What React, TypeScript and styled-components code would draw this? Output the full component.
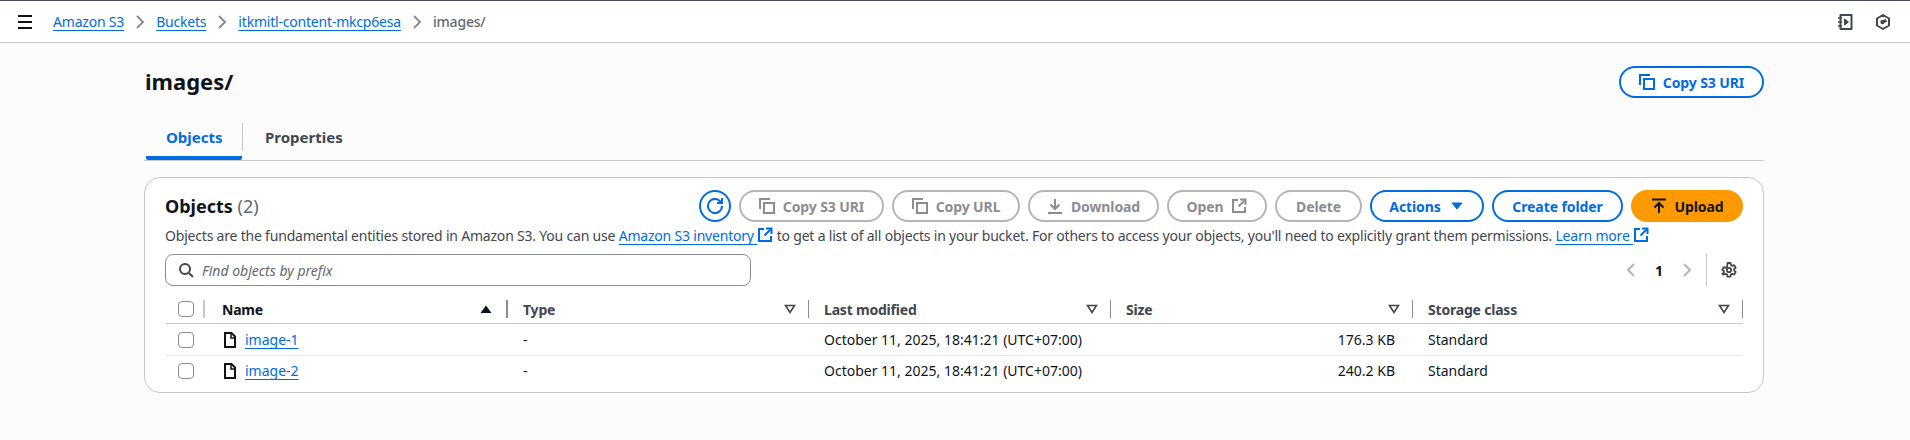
import React from 'react';
import styled, { createGlobalStyle } from 'styled-components';

const BLUE = '#006ce0';
const FONT = `'Noto Sans', 'Open Sans', Arial, sans-serif`;

const GlobalStyle = createGlobalStyle`
  html, body {
    margin: 0;
    padding: 0;
    background: #fcfcfd;
    font-family: ${FONT};
    font-size: 14px;
    color: #0f141a;
  }
  * { box-sizing: border-box; }
`;

const Page = styled.div`
  width: 1910px;
  height: 440px;
  overflow: hidden;
`;

const Header = styled.header`
  height: 43px;
  background: #fff;
  border-top: 1px solid #414d5c;
  border-bottom: 1px solid #c6c6cd;
  display: flex;
  align-items: center;
  padding: 0 19px 0 17px;
`;

const Crumbs = styled.nav`
  display: flex;
  align-items: center;
  margin-left: 20px;
  flex: 1;
  letter-spacing: -0.2px;
`;

const TextLink = styled.a`
  color: ${BLUE};
  text-decoration: underline;
  text-decoration-thickness: 1px;
  text-underline-offset: 3px;
`;

const CrumbSep = styled.span`
  display: flex;
  width: 32px;
  justify-content: center;
  color: #8c8c94;
`;

const CrumbCurrent = styled.span`
  color: #656871;
  font-weight: 500;
`;

const HeaderIcons = styled.div`
  display: flex;
  gap: 22px;
  color: #424650;
`;

const Main = styled.main`
  padding: 23px 146px 0 144px;
`;

const TitleRow = styled.div`
  display: flex;
  justify-content: space-between;
  align-items: center;
  padding-left: 1px;
  height: 32px;
`;

const Title = styled.h1`
  margin: 0 0 2px;
  font-size: 22px;
  font-weight: 700;
  line-height: 30px;
`;

const Tabs = styled.div`
  display: flex;
  margin-top: 16px;
  height: 47px;
  border-bottom: 1px solid #c6c6cd;
  padding-left: 2px;
`;

const Tab = styled.div<{ $active?: boolean }>`
  width: ${(p) => (p.$active ? '96px' : '126px')};
  height: 46px;
  padding-top: 12px;
  padding-left: ${(p) => (p.$active ? '20px' : '22px')};
  font-size: 15px;
  font-weight: 700;
  line-height: 22px;
  color: ${(p) => (p.$active ? BLUE : '#424650')};
  border-bottom: 4px solid ${(p) => (p.$active ? BLUE : 'transparent')};
  border-radius: 0 0 2px 2px;
`;

const TabDivider = styled.div`
  width: 1px;
  height: 28px;
  margin-top: 9px;
  background: #c6c6cd;
`;

const Card = styled.section`
  margin-top: 16px;
  height: 216px;
  background: #fff;
  border: 1px solid #c6c6cd;
  border-radius: 16px;
  padding: 12px 20px 0 20px;
`;

const CardHead = styled.div`
  display: flex;
  align-items: center;
  justify-content: space-between;
  height: 32px;
`;

const CardTitle = styled.h2`
  margin: 0;
  font-size: 18px;
  font-weight: 700;
  line-height: 22px;
`;

const Count = styled.span`
  font-weight: 400;
  color: #656871;
`;

const Actions = styled.div`
  display: flex;
  align-items: center;
  gap: 8px;
`;

const IconButton = styled.button`
  width: 32px;
  height: 32px;
  padding: 0;
  display: flex;
  align-items: center;
  justify-content: center;
  background: #fff;
  color: ${BLUE};
  border: 2px solid ${BLUE};
  border-radius: 50%;
`;

const Button = styled.button<{ $kind?: 'normal' | 'disabled' | 'primary'; $width: number }>`
  width: ${(p) => p.$width}px;
  height: 32px;
  padding: 0;
  display: flex;
  align-items: center;
  justify-content: center;
  gap: 8px;
  font-family: ${FONT};
  font-size: 14px;
  font-weight: 700;
  letter-spacing: -0.1px;
  border-radius: 20px;
  border: 2px solid
    ${(p) =>
      p.$kind === 'disabled' ? '#b4b4bb' : p.$kind === 'primary' ? '#ff9900' : BLUE};
  background: ${(p) => (p.$kind === 'primary' ? '#ff9900' : '#fff')};
  color: ${(p) =>
    p.$kind === 'disabled' ? '#8c8c94' : p.$kind === 'primary' ? '#0f141a' : BLUE};
`;

const Description = styled.p`
  margin: 4px 0 0;
  height: 20px;
  line-height: 20px;
  color: #424650;
  white-space: nowrap;
  letter-spacing: -0.2px;
`;

const ExternalMark = styled.span`
  display: inline-block;
  vertical-align: -2px;
  color: ${BLUE};
`;

const FilterRow = styled.div`
  display: flex;
  align-items: center;
  justify-content: space-between;
  margin-top: 8px;
  height: 32px;
`;

const Search = styled.div`
  width: 586px;
  height: 32px;
  display: flex;
  align-items: center;
  gap: 8px;
  padding-left: 12px;
  border: 1px solid #8c8c94;
  border-radius: 8px;
  color: #424650;
`;

const Placeholder = styled.span`
  font-style: italic;
  color: #656871;
`;

const Pager = styled.div`
  display: flex;
  align-items: center;
  height: 32px;
  color: #b4b4bb;
`;

const PageNumber = styled.span`
  width: 40px;
  text-align: center;
  font-weight: 700;
  color: #0f141a;
`;

const PagerDivider = styled.div`
  width: 1px;
  height: 32px;
  margin: 0 14px 0 11px;
  background: #c6c6cd;
`;

const Gear = styled.span`
  display: flex;
  color: #424650;
  margin-right: 6px;
`;

const Grid = styled.div`
  margin: 9px 0 0 1px;
`;

const columns = '40px 302px 301px 302px 302px 330px';

const HeadRow = styled.div`
  display: grid;
  grid-template-columns: ${columns};
  align-items: center;
  height: 29px;
  border-bottom: 1px solid #c6c6cd;
`;

const BodyRow = styled.div<{ $last?: boolean }>`
  display: grid;
  grid-template-columns: ${columns};
  height: ${(p) => (p.$last ? '30px' : '32px')};
  align-items: center;
  padding-top: ${(p) => (p.$last ? '0' : '1px')};
  border-bottom: ${(p) => (p.$last ? 'none' : '1px solid #e8e8ec')};
`;

const HeadCell = styled.div`
  display: flex;
  align-items: center;
  justify-content: space-between;
  height: 18px;
  padding: 0 12px 0 15px;
  font-weight: 700;
  letter-spacing: -0.2px;
  color: #424650;
  border-right: 1px solid #8c8c94;
`;

const HeadName = styled(HeadCell)`
  color: #0f141a;
  padding: 0 14px 0 16px;
  border-right-width: 2px;
`;

const CheckCell = styled.div<{ $rule?: boolean }>`
  display: flex;
  align-items: center;
  height: 18px;
  padding-left: 12px;
  border-right: ${(p) => (p.$rule ? '2px solid #c6c6cd' : 'none')};
  width: ${(p) => (p.$rule ? '39px' : 'auto')};
`;

const Checkbox = styled.span`
  display: block;
  width: 16px;
  height: 16px;
  flex: none;
  background: #fff;
  border: 1px solid #8c8c94;
  border-radius: 4px;
`;

const Cell = styled.div<{ $align?: 'right' }>`
  padding: 0 ${(p) => (p.$align ? '18px' : '15px')} 0 15px;
  line-height: 20px;
  color: #0f141a;
  text-align: ${(p) => p.$align ?? 'left'};
`;

const FileCell = styled(Cell)`
  display: flex;
  align-items: center;
  gap: 7px;
  padding-left: 16px;
`;

type IconProps = { size?: number; width?: number };

const Svg = ({ size = 16, width = 2, children }: IconProps & { children: React.ReactNode }) => (
  <svg
    width={size}
    height={size}
    viewBox="0 0 16 16"
    fill="none"
    stroke="currentColor"
    strokeWidth={width}
    style={{ display: 'block', flex: 'none' }}
  >
    {children}
  </svg>
);

const CopyIcon = () => (
  <Svg>
    <path d="M1 11V1h10" />
    <path d="M5 5h10v10H5z" />
  </Svg>
);

const ExternalIcon = () => (
  <Svg>
    <path d="M7 2H2v12h12V9" />
    <path d="M9 1.500h5.500V7" />
    <path d="M14 2 7.500 8.500" />
  </Svg>
);

const DownloadIcon = () => (
  <Svg>
    <path d="M8 1v10" />
    <path d="M3.500 6.500 8 11l4.500-4.500" />
    <path d="M1 15h14" />
  </Svg>
);

const UploadIcon = () => (
  <Svg>
    <path d="M1 1.500h14" />
    <path d="M8 15V5" />
    <path d="M3.500 9.500 8 5l4.500 4.500" />
  </Svg>
);

const RefreshIcon = () => (
  <Svg>
    <path d="M10 5h5V0" />
    <path d="M15 8a7 7 0 1 1-1.800-4.700L15 5" />
  </Svg>
);

const SearchIcon = () => (
  <Svg>
    <circle cx="7" cy="7" r="5" />
    <path d="m11 11 4 4" />
  </Svg>
);

const MenuIcon = () => (
  <Svg>
    <path d="M1 2h14M1 8h14M1 14h14" />
  </Svg>
);

const ChevronRight = () => (
  <Svg>
    <path d="m5 2 6 6-6 6" />
  </Svg>
);

const ChevronLeft = () => (
  <Svg>
    <path d="m11 2-6 6 6 6" />
  </Svg>
);

const CaretDown = () => (
  <svg width="16" height="16" viewBox="0 0 16 16" fill="currentColor" stroke="currentColor" strokeWidth="1">
    <path d="M3 5h10l-5 6z" />
  </svg>
);

const SortUp = () => (
  <svg width="12" height="12" viewBox="0 0 12 12" fill="#0f141a" style={{ display: 'block' }}>
    <path d="M0.500 10 6 2.500 11.500 10z" />
  </svg>
);

const SortNone = () => (
  <svg width="12" height="12" viewBox="0 0 12 12" fill="none" stroke="#424650" strokeWidth="1.600" style={{ display: 'block' }}>
    <path d="M1.500 2.500h9L6 9.500z" />
  </svg>
);

const FileIcon = () => (
  <Svg size={16}>
    <path d="M3 15V1h6.500L13 4.500V15z" />
    <path d="M9 1v5h4.500" strokeWidth="1.500" />
  </Svg>
);

const GearIcon = () => (
  <Svg width={1.800}>
    <circle cx="8" cy="8" r="2.200" />
    <path d="M6.500 1h3l.4 2 1.400.8 1.900-.7 1.500 2.600-1.500 1.300v1.600l1.500 1.300-1.500 2.600-1.900-.7-1.400.8-.4 2h-3l-.4-2-1.400-.8-1.900.7L1.300 11.900l1.500-1.300V9L1.300 7.700 2.800 5.100l1.900.7 1.400-.8z" strokeLinejoin="round" />
  </Svg>
);

const NotebookIcon = () => (
  <Svg>
    <path d="M3.500 1H14.500v14H3.500z" strokeLinejoin="round" />
    <path d="M1 4h4M1 8h4M1 12h4" strokeWidth="1.600" />
    <path d="M7.500 5v6l4-3z" fill="currentColor" strokeWidth="1" />
  </Svg>
);

const HexagonIcon = () => (
  <Svg>
    <path d="M8 1 14 4.500v7L8 15l-6-3.500v-7z" strokeLinejoin="round" />
    <circle cx="7.500" cy="8" r="2.200" fill="currentColor" stroke="none" />
    <path d="M7.500 6.500 11 5l1 3-4 1z" fill="currentColor" stroke="none" />
  </Svg>
);

const filters = ['Type', 'Last modified', 'Size', 'Storage class'];

const rows = [
  { name: 'image-1', size: '176.3 KB' },
  { name: 'image-2', size: '240.2 KB' },
];

const App = () => (
  <Page>
    <GlobalStyle />
    <Header>
      <MenuIcon />
      <Crumbs>
        <TextLink>Amazon S3</TextLink>
        <CrumbSep>
          <ChevronRight />
        </CrumbSep>
        <TextLink>Buckets</TextLink>
        <CrumbSep>
          <ChevronRight />
        </CrumbSep>
        <TextLink>itkmitl-content-mkcp6esa</TextLink>
        <CrumbSep>
          <ChevronRight />
        </CrumbSep>
        <CrumbCurrent>images/</CrumbCurrent>
      </Crumbs>
      <HeaderIcons>
        <NotebookIcon />
        <HexagonIcon />
      </HeaderIcons>
    </Header>
    <Main>
      <TitleRow>
        <Title>images/</Title>
        <Button $width={145}>
          <CopyIcon />
          Copy S3 URI
        </Button>
      </TitleRow>
      <Tabs>
        <Tab $active>Objects</Tab>
        <TabDivider />
        <Tab>Properties</Tab>
      </Tabs>
      <Card>
        <CardHead>
          <CardTitle>
            Objects <Count>(2)</Count>
          </CardTitle>
          <Actions>
            <IconButton>
              <RefreshIcon />
            </IconButton>
            <Button $kind="disabled" $width={145}>
              <CopyIcon />
              Copy S3 URI
            </Button>
            <Button $kind="disabled" $width={128}>
              <CopyIcon />
              Copy URL
            </Button>
            <Button $kind="disabled" $width={131}>
              <DownloadIcon />
              Download
            </Button>
            <Button $kind="disabled" $width={100}>
              Open
              <ExternalIcon />
            </Button>
            <Button $kind="disabled" $width={87}>
              Delete
            </Button>
            <Button $width={114}>
              Actions
              <CaretDown />
            </Button>
            <Button $width={131}>Create folder</Button>
            <Button $kind="primary" $width={112}>
              <UploadIcon />
              Upload
            </Button>
          </Actions>
        </CardHead>
        <Description>
          Objects are the fundamental entities stored in Amazon S3. You can use{' '}
          <TextLink>Amazon S3 inventory </TextLink>
          <ExternalMark>
            <ExternalIcon />
          </ExternalMark>{' '}
          to get a list of all objects in your bucket. For others to access your objects, you'll
          need to explicitly grant them permissions. <TextLink>Learn more </TextLink>
          <ExternalMark>
            <ExternalIcon />
          </ExternalMark>
        </Description>
        <FilterRow>
          <Search>
            <SearchIcon />
            <Placeholder>Find objects by prefix</Placeholder>
          </Search>
          <Pager>
            <ChevronLeft />
            <PageNumber>1</PageNumber>
            <ChevronRight />
            <PagerDivider />
            <Gear>
              <GearIcon />
            </Gear>
          </Pager>
        </FilterRow>
        <Grid>
          <HeadRow>
            <CheckCell $rule>
              <Checkbox />
            </CheckCell>
            <HeadName>
              Name
              <SortUp />
            </HeadName>
            {filters.map((label) => (
              <HeadCell key={label}>
                {label}
                <SortNone />
              </HeadCell>
            ))}
          </HeadRow>
          {rows.map((r, i) => (
            <BodyRow key={r.name} $last={i === rows.length - 1}>
              <CheckCell>
                <Checkbox />
              </CheckCell>
              <FileCell>
                <FileIcon />
                <TextLink>{r.name}</TextLink>
              </FileCell>
              <Cell>-</Cell>
              <Cell>October 11, 2025, 18:41:21 (UTC+07:00)</Cell>
              <Cell $align="right">{r.size}</Cell>
              <Cell>Standard</Cell>
            </BodyRow>
          ))}
        </Grid>
      </Card>
    </Main>
  </Page>
);

export default App;
